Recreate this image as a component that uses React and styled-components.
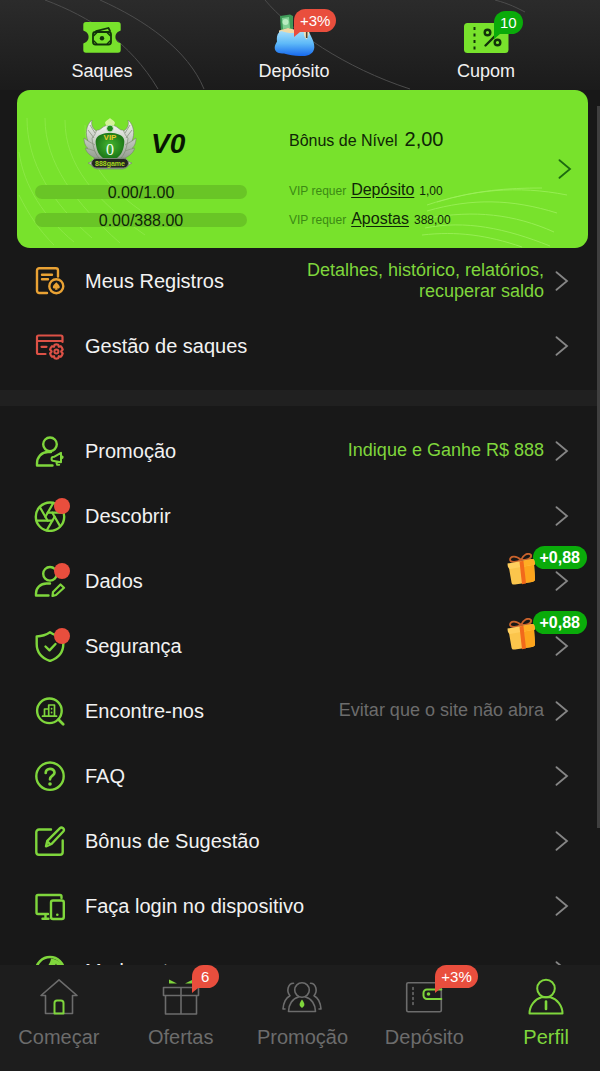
import React from 'react'
import styled, { createGlobalStyle } from 'styled-components'

const GREEN = '#78e22c'
const LINE = '#7fd63c'
const RED = '#e94e3d'
const GREY = '#6c6c6c'

const GlobalStyle = createGlobalStyle`
    * {
        box-sizing: border-box;
    }

    body {
        margin: 0;
        background: #181818;
        font-family: 'Liberation Sans', Arial, sans-serif;
    }

    a {
        color: inherit;
        text-decoration: none;
    }
`

const Page = styled.div`
    position: relative;
    display: flex;
    flex-direction: column;
    height: 100vh;
    overflow: hidden;
    color: #f2f2f2;
    background: #181818;
`

const Content = styled.main`
    flex: 1;
    min-height: 0;
    overflow: hidden;
`

const ScrollThumb = styled.div`
    position: absolute;
    top: 106px;
    right: 0;
    width: 3px;
    height: 722px;
    background: #3f3f3f;
`

const Top = styled.header`
    position: relative;
    background: linear-gradient(#2b2b2b, #1b1b1b);
`

const TopLines = styled.svg`
    position: absolute;
    top: 0;
    left: 0;
    width: 100%;
    height: 100%;
`

const Shortcuts = styled.nav`
    position: relative;
    display: grid;
    grid-template-columns: repeat(3, 1fr);
    padding: 8px 18px 8px 6px;
`

const Shortcut = styled.a`
    display: flex;
    flex-direction: column;
    align-items: center;
    gap: 5px;
    font-size: 18px;
    line-height: 21px;
`

const IconBox = styled.span`
    position: relative;
    display: block;
    width: ${({ $size }) => $size}px;
    height: ${({ $size }) => $size}px;

    svg {
        display: block;
        width: 100%;
        height: 100%;
    }
`

const Badge = styled.span`
    position: absolute;
    top: ${({ $top }) => $top}px;
    left: ${({ $left }) => $left}px;
    padding: 0 6px;
    min-width: 27px;
    height: 23px;
    border-radius: 12px 12px 12px 0;
    background: ${({ $color }) => $color};
    color: #fff;
    font-size: 15px;
    line-height: 23px;
    text-align: center;

    &::after {
        content: '';
        position: absolute;
        left: 0;
        bottom: -5px;
        border-top: 5px solid ${({ $color }) => $color};
        border-right: 6px solid transparent;
    }
`

const VipCard = styled.section`
    position: relative;
    display: grid;
    grid-template-columns: 212fr 227fr 14px;
    column-gap: 42px;
    margin: 0 12px 0 17px;
    padding: 27px 16px 15px 18px;
    border-radius: 13px;
    overflow: hidden;
    background: ${GREEN};
    color: #0f2606;
`

const CardLines = styled.svg`
    position: absolute;
    top: 0;
    left: 0;
    width: 100%;
    height: 100%;
`

const VipLevel = styled.div`
    position: relative;
    display: flex;
    flex-direction: column;
    gap: 14px;
`

const Emblem = styled.div`
    display: flex;
    align-items: center;
    gap: 14px;
    height: 54px;
    padding-left: 48px;

    svg {
        width: 54px;
        height: 54px;
    }
`

const Level = styled.strong`
    color: #081503;
    font-size: 28px;
    font-style: italic;
    line-height: 32px;
`

const Meter = styled.div`
    height: 14px;
    border-radius: 7px;
    background: #69c526;
    font-size: 16px;
    line-height: 15px;
    text-align: center;
`

const VipInfo = styled.div`
    position: relative;
    display: flex;
    flex-direction: column;
`

const Bonus = styled.div`
    display: flex;
    align-items: baseline;
    gap: 7px;
    height: 58px;
    padding-top: 8px;
    font-size: 16px;
    line-height: 28px;

    b {
        font-weight: 400;
        font-size: 20px;
    }
`

const Requirement = styled.div`
    display: flex;
    align-items: baseline;
    gap: 5px;
    height: 29px;
    font-size: 12px;
    line-height: 29px;

    span {
        color: #3b8a14;
    }

    a {
        font-size: 16px;
        text-decoration: underline;
        text-underline-offset: 2px;
    }
`

const CardArrow = styled.a`
    position: relative;
    align-self: center;
    padding-bottom: 12px;

    svg {
        display: block;
    }
`

const Menu = styled.nav`
    padding: ${({ $last }) => ($last ? '12px 0 0' : '0 0 12px')};
    border-bottom: ${({ $last }) => ($last ? '0' : '16px solid #202020')};
`

const Row = styled.a`
    position: relative;
    display: flex;
    align-items: center;
    height: 65px;
    padding: 0 31px 0 34px;
`

const Dot = styled.span`
    position: absolute;
    top: -2px;
    right: -4px;
    width: 16px;
    height: 16px;
    border-radius: 50%;
    background: ${RED};
`

const RowLabel = styled.span`
    margin-left: 19px;
    font-size: 20px;
    line-height: 24px;
    white-space: nowrap;
`

const Hint = styled.span`
    flex: 1;
    margin-left: 48px;
    padding-right: 11px;
    color: ${({ $muted }) => ($muted ? GREY : LINE)};
    font-size: 18px;
    line-height: 21px;
    text-align: right;
`

const Reward = styled.span`
    position: absolute;
    top: -2px;
    right: 13px;
    padding: 0 7px;
    height: 23px;
    border-radius: 12px;
    background: #0aab0a;
    color: #fff;
    font-size: 16px;
    font-weight: 700;
    line-height: 23px;

    svg {
        position: absolute;
        top: 7px;
        left: -27px;
    }
`

const TabBar = styled.nav`
    display: grid;
    grid-template-columns: repeat(5, 1fr);
    flex: none;
    padding: 12px 0 22px;
    margin: 0 -7px 0 -2px;
    background: #1d1d1d;
`

const Tab = styled.a`
    display: flex;
    flex-direction: column;
    align-items: center;
    gap: 8px;
    color: ${({ $active }) => ($active ? LINE : GREY)};
    font-size: 20px;
    line-height: 24px;
`

const Stroke = ({ children, color = LINE, width = 2.4, box = 32 }) => (
    <svg
        viewBox={`0 0 ${box} ${box}`}
        fill="none"
        stroke={color}
        strokeWidth={width}
        strokeLinecap="round"
        strokeLinejoin="round"
    >
        {children}
    </svg>
)

const Chevron = ({ color = '#858585' }) => (
    <svg width="14" height="20" viewBox="0 0 14 20" fill="none" stroke={color} strokeWidth="1.8" strokeLinecap="round">
        <path d="M1.500 1.200 12 10 1.500 18.800" />
    </svg>
)

const SaquesIcon = () => (
    <svg viewBox="0 0 48 48">
        <path
            fill={GREEN}
            d="M8 14h32a2.700 2.700 0 0 1 2.700 2.700v5.300a1 1 0 0 1-1 1c-3 1.200-4.300 3.300-4.300 6s1.300 4.800 4.300 6a1 1 0 0 1 1 1v6a2.700 2.700 0 0 1-2.700 2.700H8A2.700 2.700 0 0 1 5.300 42v-6a1 1 0 0 1 1-1c3-1.200 4.300-3.300 4.300-6s-1.300-4.800-4.300-6a1 1 0 0 1-1-1v-5.300A2.700 2.700 0 0 1 8 14z"
        />
        <rect x="15" y="24" width="18" height="12.500" rx="2.500" fill="none" stroke="#12320a" strokeWidth="1.800" />
        <path d="M18 23.200 30.500 20l1.500 3" fill="none" stroke="#12320a" strokeWidth="1.800" strokeLinecap="round" />
        <circle cx="24" cy="30.200" r="2.200" fill="#12320a" />
        <path d="M15.500 28l3.500-3.500M32.500 28 29 24.500M15.500 32.500 19 36M32.500 32.500 29 36" stroke="#12320a" strokeWidth="1.400" />
    </svg>
)

const DepositoIcon = () => (
    <svg viewBox="0 0 48 48">
        <defs>
            <linearGradient id="pouch" x1="0" y1="0" x2="0" y2="1">
                <stop offset="0" stopColor="#a9e0fa" />
                <stop offset=".5" stopColor="#5fbaf8" />
                <stop offset="1" stopColor="#1668ee" />
            </linearGradient>
        </defs>
        <path d="M10 8l10-1.500 3 1.500v16H11z" fill="#3e9a58" />
        <path d="M12 10l7-1 1 11-7 1z" fill="#7fd092" />
        <circle cx="15.500" cy="14" r="3" fill="#b9ecc0" />
        <path d="M9 22.500 18 20l8 2 10-1 1 5H9z" fill="#efd9a6" />
        <path d="M11 23c7 2.500 15 3 24 0l3.500-.5c2 6 6 10 5.800 17-.3 4.500-3.300 7.500-9.300 8.500-7 .3-14-.5-21-2.500-5 0-9-1-9.300-5.500 0-3 1.300-4.500 2.300-6.500C6.500 29 7 25 11 23z" fill="url(#pouch)" />
        <path d="M34 22c-.5 4 0 7 2.500 9.500C38.500 28 39.500 25 39 22z" fill="#f3dfb4" />
        <path d="M36.700 24v6" stroke="#4d4334" strokeWidth="1.600" />
    </svg>
)

const CupomIcon = () => (
    <svg viewBox="0 0 48 48">
        <rect x="2" y="15" width="44.500" height="30" rx="3.500" fill={GREEN} />
        <path d="M12.500 19v23" stroke="#12320a" strokeWidth="2" strokeDasharray="3 3.500" />
        <g fill="none" stroke="#12320a" strokeWidth="2.400" strokeLinecap="round">
            <path d="M23.500 37.500 37 24" />
            <circle cx="25.500" cy="24.500" r="2.800" />
            <circle cx="35.500" cy="34.500" r="2.800" />
        </g>
    </svg>
)

const EmblemIcon = () => (
    <svg viewBox="0 0 54 54">
        <defs>
            <linearGradient id="wing" x1="0" y1="0" x2="0" y2="1">
                <stop offset="0" stopColor="#f4f6f1" />
                <stop offset="1" stopColor="#929c8e" />
            </linearGradient>
            <radialGradient id="shield">
                <stop offset="0" stopColor="#45b530" />
                <stop offset="1" stopColor="#1e7a18" />
            </radialGradient>
        </defs>
        <g fill="url(#wing)" stroke="#77816f" strokeWidth=".6">
            <path d="M14 42C7 39 3 35 2.500 31l3 1C2 29 1 25 1 21l4 3C2 17 3 8 9 3c-1 4 0 7 2 9l7 6-1 24z" />
            <path d="M40 42c7-3 11-7 11.500-11l-3 1c3.500-3 4.500-7 4.500-11l-4 3c3-7 2-16-4-21 1 4 0 7-2 9l-7 6 1 24z" />
            <path d="M14 13c4 1 5-5 13-5s9 6 13 5c2 3 1 4 5 8-1 9-3 17-9 22H18c-6-5-8-13-9-22 4-4 3-5 5-8z" />
            <path d="M5 46c5-1 6-5 9-5h26c3 0 4 4 9 5-3 1-5 5-9 6H14c-4-1-6-5-9-6z" />
        </g>
        <path d="M5 24l7 4M6 32l6 2M5 13l6 8M7 8l5 8M49 24l-7 4M48 32l-6 2M49 13l-6 8M47 8l-5 8" stroke="#89937f" strokeWidth=".8" />
        <path d="M17 18c7-3 13-3 20 0 4 2 5 5 4 10-1 6-3 10-7 13H20c-4-3-6-7-7-13-1-5 0-8 4-10z" fill="url(#shield)" />
        <path d="M22 6c1-3 3-3 5-5 2 2 4 2 5 5l-2 4h-6z" fill="#d4f29a" />
        <circle cx="27" cy="11.500" r="3.400" fill="#1d8a1c" stroke="#e8eee4" strokeWidth=".8" />
        <rect x="8.500" y="41.500" width="37" height="9.500" rx="4.700" fill="#23261f" stroke="#7d8679" />
        <text x="27" y="23" textAnchor="middle" fontSize="8" fontWeight="700" fill="#e8c92b">VIP</text>
        <text x="27" y="38" textAnchor="middle" fontSize="16" fontFamily="Liberation Serif, serif" fill="#f4fff0">0</text>
        <text x="27" y="48.500" textAnchor="middle" fontSize="7" fontWeight="700" fill="#a6d820">888game</text>
    </svg>
)

const GiftIcon = () => (
    <svg width="32" height="32" viewBox="0 0 32 32">
        <path d="M15 7C10 2 4 3 4 7c1 3 7 2 11 0 2-5 7-8 10-5 1 4-5 5-10 5z" fill="none" stroke="#c9622c" strokeWidth="1.800" />
        <path d="M3 15l25-4 1 15c0 2-1 2.500-3 3L9 31.500c-2 .3-3 0-3.500-2z" fill="#fbc54c" />
        <path d="M18 12l10-1 1 15c0 2-1 2.500-3 3l-7 1z" fill="#fda41c" />
        <path d="M1.500 10.500 26 6c2 0 2.500 1 3 5.500L4 16c-2-.5-2.500-3-2.500-5.500z" fill="#ffcf5e" />
        <path d="M17 7.700 26 6c2 0 2.500 1 3 5.500l-11 2z" fill="#ffad24" />
        <path d="M13.500 8.500l4-.8L20 30.500l-4 .7z" fill="#f2691b" />
    </svg>
)

const menuIcons = {
    records: (
        <Stroke color="#e9a234">
            <path d="M24 11.500V5.500a2.200 2.200 0 0 0-2.200-2.200H5.200A2.200 2.200 0 0 0 3 5.500v20.300A2.200 2.200 0 0 0 5.200 28H13" />
            <path d="M8 9.800h10M8 14.300h6" />
            <circle cx="22.300" cy="21.200" r="7" />
            <path d="M22.300 17.200c1.500 2 3.700 3 3.500 5-.2 1.300-1.600 1.600-2.600 1l.5 1.600h-2.800l.5-1.600c-1 .6-2.400.3-2.600-1-.2-2 2-3 3.500-5z" fill="#e9a234" stroke="none" />
        </Stroke>
    ),
    withdraw: (
        <Stroke color="#dc5146" width={2.2}>
            <path d="M28.500 12V7a1.500 1.500 0 0 0-1.500-1.500H4.500A1.500 1.500 0 0 0 3 7v15.500A1.500 1.500 0 0 0 4.500 24h7M3 11h25.500M7.500 16.800h5" />
            <path d="M20.600 14.700a7 7 0 0 1 3.600 0l.6 2.100 2-.6a7 7 0 0 1 1.900 3.300l-1.500 2 1.500 2a7 7 0 0 1-1.900 3.300l-2-.6-.6 2.100a7 7 0 0 1-3.600 0l-.6-2.100-2 .6a7 7 0 0 1-1.900-3.300l1.500-2-1.500-2a7 7 0 0 1 1.900-3.300l2 .6z" />
            <circle cx="22.400" cy="21.500" r="2" strokeWidth="2" />
        </Stroke>
    ),
    promo: (
        <Stroke>
            <circle cx="16" cy="9.300" r="6.800" />
            <path d="M18.500 30.500H3v-2c0-6.500 4.500-11.500 11-11.500h3" />
            <path d="M17.500 24c0-1.500 1-2.200 2.500-2.200l7-4v9.500l-7-1.300c-1.500 0-2.500-.5-2.500-2zM22 26.500l1.200 3.300h2M27.300 21.200c1.800-.2 2 2 0 2.200" strokeWidth="2" />
        </Stroke>
    ),
    discover: (
        <Stroke>
            <circle cx="16" cy="16.700" r="14.200" />
            <g strokeWidth="2.200">
                {[0, 60, 120, 180, 240, 300].map((angle) => (
                    <path key={angle} d="M13.700 12.700H29.500" transform={`rotate(${angle} 16 16.700)`} />
                ))}
            </g>
        </Stroke>
    ),
    profile: (
        <Stroke>
            <circle cx="16" cy="8.800" r="6.800" />
            <path d="M16 18.500h-3.500C6.500 18.500 2 23 2 28.500V30.500h12.500" />
            <path d="M26.500 19.500l3.500 3.200-8 7.300-3.500 1 .5-4z" strokeWidth="2.200" />
        </Stroke>
    ),
    security: (
        <Stroke>
            <path d="M16 2.300c4 2.800 8.500 4 13.300 4.200V14c0 9-5 14-13.300 17C7.700 28 2.700 23 2.700 14V6.500C7.500 6.300 12 5.100 16 2.300z" />
            <path d="M11.500 16.500l4 3.800 6-6.300" />
        </Stroke>
    ),
    find: (
        <Stroke>
            <circle cx="15.400" cy="15.800" r="12.300" />
            <path d="M24.500 24.500l4.700 4.700" strokeWidth="2.800" />
            <path d="M8.500 21.200h14M10.500 21v-7h4M14.700 21V10h5.800v11M17.600 13.500v.3M17.600 17.300v.3" strokeWidth="1.700" />
        </Stroke>
    ),
    faq: (
        <Stroke>
            <circle cx="16" cy="16.200" r="13.700" />
            <path d="M11.700 13c0-2.500 1.800-4.200 4.300-4.200s4.500 1.500 4.500 4c0 2.800-4.500 3-4.500 6.500" strokeWidth="2.700" />
            <circle cx="16" cy="24" r="1.800" fill={LINE} stroke="none" />
        </Stroke>
    ),
    suggest: (
        <Stroke>
            <path d="M17 4.500H5A2.700 2.700 0 0 0 2.300 7.200V27A2.700 2.700 0 0 0 5 29.700h21a2.700 2.700 0 0 0 2.700-2.700V15.500" />
            <path d="M26 3.200c1.800-1.800 5.300 1 3.500 3L17.500 19l-5.500 2.300 1.300-5.500zM13.500 16.500l3 3" />
        </Stroke>
    ),
    devices: (
        <Stroke>
            <path d="M27.500 8V6.500A1.500 1.500 0 0 0 26 5H4A1.500 1.500 0 0 0 2.500 6.500v16A1.500 1.500 0 0 0 4 24h10M11.500 24v4.500M8.500 28.700h6" />
            <rect x="17" y="10.500" width="12.800" height="18.500" rx="2" />
            <path d="M23.300 24.700v.1" strokeWidth="2.600" />
        </Stroke>
    ),
    theme: (
        <Stroke width={2.6}>
            <circle cx="16" cy="16" r="14" />
            <path d="M17 3.500c6 .5 11 4 12.500 10H24l-2-5-3 6.500-8-1c3-3 5.500-6 6-10.500z" fill={LINE} stroke="none" />
        </Stroke>
    ),
}

const tabIcons = {
    home: (
        <Stroke box={40} color={GREY} width={1.6}>
            <path d="M6.500 18.500V36.500h27V18.500M6.500 18.500h-4.500L20 2.800l18 15.700h-4.500" />
            <path d="M15.500 36.500V26a2.500 2.500 0 0 1 2.500-2.500h4A2.500 2.500 0 0 1 24.500 26v10.500z" stroke={LINE} strokeWidth="2" />
        </Stroke>
    ),
    gift: (
        <Stroke box={40} color={GREY} width={1.6}>
            <path d="M2.500 10.500h35v8h-35zM4.500 18.500h31v18.500h-31zM20 10.500V37" />
            <path d="M8 2.500l8 4H8zM32 2.500l-8 4h8z" fill={LINE} stroke="none" />
        </Stroke>
    ),
    people: (
        <Stroke box={40} color={GREY} width={1.6}>
            <circle cx="20" cy="13" r="7.300" />
            <path d="M6.500 34.500c0-7 4-13 10-14.500M33.500 34.500c0-7-4-13-10-14.500M6.500 34.500h27" />
            <path d="M11.500 6.200c-5.500 0-7.500 8-3.500 12.500-4 2-6.500 7-7 13.300h2M28.500 6.200c5.500 0 7.500 8 3.500 12.500 4 2 6.500 7 7 13.300h-2" />
            <path d="M20 22.500c3.200 4.500 3.200 6 0 8.500-3.200-2.500-3.200-4 0-8.500z" fill={LINE} stroke="none" />
        </Stroke>
    ),
    wallet: (
        <Stroke box={40} color={GREY} width={1.6}>
            <rect x="2.700" y="5.700" width="34.600" height="29" rx="1.500" />
            <path d="M9 10.500v20" strokeDasharray="2 3" />
            <path d="M37.300 12.500H23a3.500 3.500 0 0 0-3.500 3.500v2.500A3.500 3.500 0 0 0 23 22h14.300" stroke={LINE} strokeWidth="2" />
            <circle cx="24.500" cy="17" r="1.800" fill={LINE} stroke="none" />
        </Stroke>
    ),
    person: (
        <Stroke box={40} width={2}>
            <circle cx="20" cy="11.500" r="8.800" />
            <path d="M3.500 36.500c0-8 5.500-14.500 12-16.200h9c6.500 1.700 12 8.200 12 16.200z" />
            <path d="M20 24.500v7.500" strokeWidth="2.600" />
        </Stroke>
    ),
}

const firstMenu = [
    { icon: 'records', label: 'Meus Registros', hint: 'Detalhes, histórico, relatórios, recuperar saldo' },
    { icon: 'withdraw', label: 'Gestão de saques' },
]

const secondMenu = [
    { icon: 'promo', label: 'Promoção', hint: 'Indique e Ganhe R$ 888' },
    { icon: 'discover', label: 'Descobrir', dot: true },
    { icon: 'profile', label: 'Dados', dot: true, reward: '+0,88' },
    { icon: 'security', label: 'Segurança', dot: true, reward: '+0,88' },
    { icon: 'find', label: 'Encontre-nos', hint: 'Evitar que o site não abra', muted: true },
    { icon: 'faq', label: 'FAQ' },
    { icon: 'suggest', label: 'Bônus de Sugestão' },
    { icon: 'devices', label: 'Faça login no dispositivo' },
    { icon: 'theme', label: 'Modo noturno' },
]

const tabs = [
    { icon: 'home', label: 'Começar' },
    { icon: 'gift', label: 'Ofertas', badge: '6' },
    { icon: 'people', label: 'Promoção' },
    { icon: 'wallet', label: 'Depósito', badge: '+3%' },
    { icon: 'person', label: 'Perfil', active: true },
]

const MenuRow = ({ icon, label, hint, muted, dot, reward }) => (
    <Row href="#">
        <IconBox $size={32}>
            {menuIcons[icon]}
            {dot && <Dot />}
        </IconBox>
        <RowLabel>{label}</RowLabel>
        <Hint $muted={muted}>{hint}</Hint>
        <Chevron />
        {reward && (
            <Reward>
                <GiftIcon />
                {reward}
            </Reward>
        )}
    </Row>
)

const App = () => (
    <Page>
        <GlobalStyle />
        <Content>
            <Top>
                <TopLines viewBox="0 0 600 90" preserveAspectRatio="none" fill="none" stroke="#4c4c4c" aria-hidden="true">
                    <path d="M45 0c45 17 85 42 113 89M100 0c45 20 88 50 104 89M265 0c25 30 80 68 145 89M495 0c15 4 22 8 30 12" />
                </TopLines>
                <Shortcuts>
                    <Shortcut href="#">
                        <IconBox $size={48}>
                            <SaquesIcon />
                        </IconBox>
                        Saques
                    </Shortcut>
                    <Shortcut href="#">
                        <IconBox $size={48}>
                            <DepositoIcon />
                            <Badge $top={1} $left={24} $color={RED}>+3%</Badge>
                        </IconBox>
                        Depósito
                    </Shortcut>
                    <Shortcut href="#">
                        <IconBox $size={48}>
                            <CupomIcon />
                            <Badge $top={3} $left={32} $color="#0aab0a">10</Badge>
                        </IconBox>
                        Cupom
                    </Shortcut>
                </Shortcuts>
            </Top>

            <VipCard>
                <CardLines viewBox="0 0 571 158" preserveAspectRatio="none" fill="none" stroke="#9df05c" aria-hidden="true">
                    <path d="M10 28c0 45 25 85 65 120M28 28c0 45 30 85 75 125M48 30c0 45 30 80 80 115M2 62c5 35 25 65 55 90M68 35c0 40 30 70 70 95M2 105c10 20 20 35 35 50" opacity=".5" />
                    <path d="M410 115c45-15 90-20 140-10M410 121c45-13 85-12 130 2M412 128c45-8 85-4 125 14M408 138c40-8 80 0 125 18M405 145c35-4 65 0 100 12M420 112c40-12 70-14 105-14" opacity=".8" />
                </CardLines>
                <VipLevel>
                    <Emblem>
                        <EmblemIcon />
                        <Level>V0</Level>
                    </Emblem>
                    <Meter>0.00/1.00</Meter>
                    <Meter>0.00/388.00</Meter>
                </VipLevel>
                <VipInfo>
                    <Bonus>
                        Bônus de Nível <b>2,00</b>
                    </Bonus>
                    <Requirement>
                        <span>VIP requer</span>
                        <a href="#">Depósito</a>
                        1,00
                    </Requirement>
                    <Requirement>
                        <span>VIP requer</span>
                        <a href="#">Apostas</a>
                        388,00
                    </Requirement>
                </VipInfo>
                <CardArrow href="#" aria-label="VIP">
                    <Chevron color="#1d6b10" />
                </CardArrow>
            </VipCard>

            <Menu>
                {firstMenu.map((item) => (
                    <MenuRow key={item.label} {...item} />
                ))}
            </Menu>
            <Menu $last>
                {secondMenu.map((item) => (
                    <MenuRow key={item.label} {...item} />
                ))}
            </Menu>
        </Content>

        <ScrollThumb />

        <TabBar>
            {tabs.map(({ icon, label, badge, active }) => (
                <Tab key={label} href="#" $active={active}>
                    <IconBox $size={40}>
                        {tabIcons[icon]}
                        {badge && <Badge $top={-12} $left={31} $color={RED}>{badge}</Badge>}
                    </IconBox>
                    {label}
                </Tab>
            ))}
        </TabBar>
    </Page>
)

export default App
